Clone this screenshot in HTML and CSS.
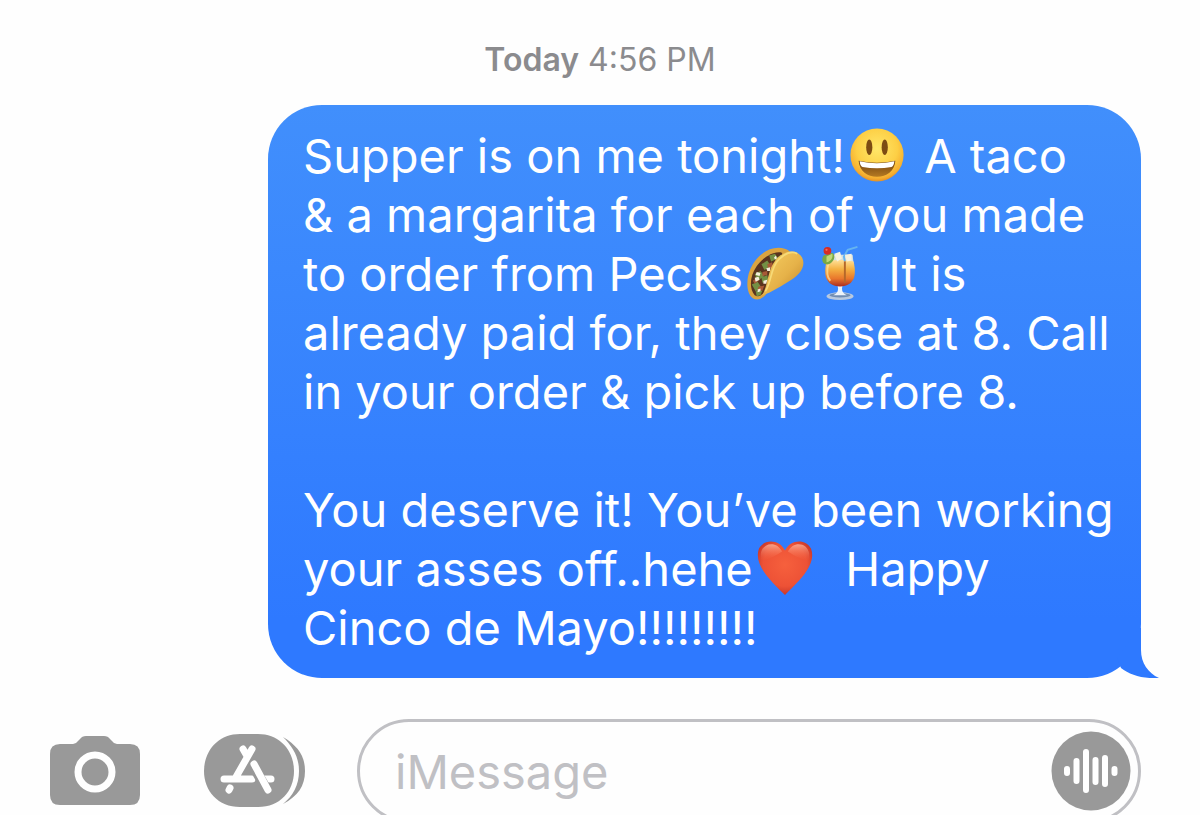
FILE: index.html
```html
<!DOCTYPE html>
<html lang="en">
<head>
  <meta charset="UTF-8" />
  <meta name="viewport" content="width=device-width, initial-scale=1.0"/>
  <title>Messages</title>
  <link rel="stylesheet" href="styles.css">
</head>
<body>

<main class="thread">
  <p class="timestamp"><strong>Today</strong> 4:56 PM</p>

  <div class="bubble">
    <p>Supper is on me tonight!<svg class="emoji" viewBox="0 0 60 60" role="img" aria-label="smiley">
        <defs>
          <radialGradient id="face" cx="50%" cy="38%" r="64%">
            <stop offset="0" stop-color="#ffe76a"/>
            <stop offset=".6" stop-color="#fdcf45"/>
            <stop offset=".87" stop-color="#f5ae30"/>
            <stop offset="1" stop-color="#dc8524"/>
          </radialGradient>
          <linearGradient id="mouth" x1="0" y1="0" x2="0" y2="1">
            <stop offset="0" stop-color="#6d3f10"/>
            <stop offset="1" stop-color="#b57a22"/>
          </linearGradient>
        </defs>
        <circle cx="30" cy="30" r="27.500" fill="url(#face)"/>
        <ellipse cx="22" cy="22" rx="3.200" ry="8" fill="#7c4b13"/>
        <ellipse cx="38" cy="22" rx="3.200" ry="8" fill="#7c4b13"/>
        <path d="M11 36Q30 40 49 36C48 47 40 52.500 30 52.500S12 47 11 36Z" fill="url(#mouth)"/>
        <path d="M12 36.500Q30 40.500 48 36.500Q47.500 41 45 42.500Q30 45 15 42.500Q12.500 41 12 36.500Z" fill="#fff"/>
      </svg> A taco &amp;&nbsp;a margarita for each of you made to order from Pecks<svg class="emoji" viewBox="0 0 60 60" role="img" aria-label="taco">
        <defs>
          <linearGradient id="shell" x1="0" y1="0" x2="1" y2="1">
            <stop offset="0" stop-color="#f6cf62"/>
            <stop offset=".55" stop-color="#e6b249"/>
            <stop offset="1" stop-color="#bd8228"/>
          </linearGradient>
        </defs>
        <path d="M7 56C-1 50 0 32 7 21C14 9 28 1 40 5C45 6 47 10 47 14L20 53Q13 60 7 56Z" fill="#dba440"/>
        <path d="M9 53C3 46 4 33 11 23C17 14 29 7 37 9L41 17L18 51Q13 56 9 53Z" fill="#5a351f"/>
        <g fill="#739044">
          <path d="M24 12l6-2 3 5-7 3zM16 21l6-4 4 6-7 4zM9 31l6-3 4 5-7 5zM6 42l6-3 4 6-6 4zM31 15l5-4 2 5-5 3zM16 35l6-3 1 6-6 2zM10 49l7-1-2 5-4 1z"/>
        </g>
        <g fill="#a85936">
          <path d="M22 21l5-2 1 5-5 2zM17 29l5-1 0 4-5 1zM7 38l4-3 2 3-4 3zM13 44l6-1-2 5-5 0z"/>
        </g>
        <g fill="#f5f0dd">
          <path d="M21 25l4-1 0 4-3 0zM11 29l4 1-1 3-4-1zM9 35l4-1 1 3-4 2zM18 38l4-1-1 4-3 0zM12 47l3-1 0 3-3 1zM29 14l2-2 1 3-2 1z"/>
        </g>
        <path d="M17 53C23 42 22 27 31 16C39 7 52 4 58 14C62 22 57 31 47 37C37 43 27 50 17 53Z" fill="url(#shell)"/>
        <path d="M20 49C27 38 25 25 34 16C40 10 47 7 53 10" fill="none" stroke="#f7da77" stroke-width="1.800"/>
      </svg><svg class="emoji" viewBox="0 0 60 60" role="img" aria-label="tropical drink">
        <defs>
          <linearGradient id="drink" x1="0" y1="0" x2="0" y2="1">
            <stop offset="0" stop-color="#ffe098"/>
            <stop offset=".35" stop-color="#f4b142"/>
            <stop offset=".7" stop-color="#e9772c"/>
            <stop offset="1" stop-color="#a92b22"/>
          </linearGradient>
        </defs>
        <ellipse cx="29" cy="54" rx="14" ry="4" fill="#b9c9df"/>
        <ellipse cx="29" cy="53" rx="11" ry="2.300" fill="#718db3"/>
        <path d="M26 41H32L31 46Q31 51 36 53H22Q27 51 27 46Z" fill="#edf3fa"/>
        <path d="M15 11H42L43 20H15Z" fill="#dfe6df" opacity=".92"/>
        <path d="M15 18C12 31 13 43 29 44C45 43 46 31 43 18Q29 15 15 18Z" fill="url(#drink)"/>
        <path d="M17 20C15 28 15 34 19 38" fill="none" stroke="#ffe29c" stroke-width="2" opacity=".7"/>
        <path d="M34 18L33 13L37 6L47 3" fill="none" stroke="#65b4f0" stroke-width="2"/>
        <path d="M34 18V40" stroke="#b5682a" stroke-width="2"/>
        <path d="M23 10L29 8L31 15L26 18ZM34 11L41 10L41 17L36 18Z" fill="#f6f2df"/>
        <path d="M12 12C9 16 11 22 17 21C23 19 25 12 21 9Z" fill="#78a844"/>
        <path d="M15 13L21 10C22 14 20 18 15 19Z" fill="#bed779"/>
        <circle cx="16" cy="7" r="4" fill="#d52d25"/>
        <circle cx="15" cy="6" r="1.200" fill="#f46b58"/>
      </svg> It is already paid for, they close at 8. Call in your order &amp; pick up before 8.</p>

    <p>You deserve it! You’ve been working your asses off..hehe<svg class="emoji" viewBox="0 0 60 60" role="img" aria-label="red heart">
        <defs>
          <radialGradient id="heart" cx="50%" cy="43%" r="62%">
            <stop offset="0" stop-color="#f6603d"/>
            <stop offset=".65" stop-color="#ed5236"/>
            <stop offset="1" stop-color="#bd3027"/>
          </radialGradient>
          <linearGradient id="shine" x1="0" y1="0" x2="0" y2="1">
            <stop offset="0" stop-color="#ffc0a8"/>
            <stop offset="1" stop-color="#f6603d" stop-opacity="0"/>
          </linearGradient>
        </defs>
        <path d="M30 12C25 1 9 -1 3 10C-3 27 16 44 30 58C44 44 63 27 57 10C51 -1 35 1 30 12Z" fill="url(#heart)"/>
        <path d="M5 15C7 3 22 2 27 13Q17 20 5 23ZM33 13C38 2 53 3 55 15V23Q43 20 33 13Z" fill="url(#shine)" opacity=".75"/>
      </svg>&nbsp; Happy Cinco de Mayo!!!!!!!!!</p>

    <svg class="tail" viewBox="0 0 48 50" aria-hidden="true">
      <path d="M28 0H30V22C30 35 37 45 48 50C32 51 19 47 10 40L6 30Z" fill="#2e79ff"/>
    </svg>
  </div>
</main>

<form class="composer">
  <button class="icon-button" type="button" aria-label="Camera">
    <svg width="90" height="70" viewBox="0 0 90 70">
      <path d="M10 8H23Q26 8 28 5L30 3Q32 0 36 0H54Q58 0 60 3L62 5Q64 8 67 8H80Q90 8 90 18V59Q90 69 80 69H10Q0 69 0 59V18Q0 8 10 8Z" fill="#999"/>
      <circle cx="45" cy="36" r="17" fill="none" stroke="#fff" stroke-width="7"/>
    </svg>
  </button>

  <button class="icon-button" type="button" aria-label="Apps">
    <svg width="102" height="74" viewBox="0 0 102 74">
      <path d="M79 3C94 12 101 22 101 37S94 62 79 70C89 62 95 51 95 37S89 13 79 3Z" fill="#999"/>
      <path d="M36 0H54C76 0 90 17 90 37S76 73 54 73H36C14 73 0 57 0 37S14 0 36 0Z" fill="#999"/>
      <g fill="none" stroke="#fff" stroke-width="7" stroke-linecap="round">
        <path d="M39 15L43 22M48 15L32 43M20 45H48M58 45H67M26 54L25 56"/>
        <path d="M48 30L63 56" stroke="#999" stroke-width="10" stroke-linecap="butt"/>
        <path d="M50 30L64 56"/>
      </g>
    </svg>
  </button>

  <div class="field">
    <input class="message-input" type="text" placeholder="iMessage" aria-label="iMessage">
    <button class="audio-button" type="button" aria-label="Record audio">
      <svg width="80" height="80" viewBox="0 0 80 80">
        <circle cx="40" cy="40" r="39.500" fill="#999"/>
        <path d="M16 38V42M25.500 30V50M35 21V59M44.500 29V51M54 27V53M63.500 38V42" fill="none" stroke="#fff" stroke-width="6" stroke-linecap="round"/>
      </svg>
    </button>
  </div>
</form>

</body>
</html>
```

FILE: styles.css
```css
:root {
  --bubble-top: #418ffc;
  --bubble-bottom: #2e79ff;
  --gray: #8b8b8e;
  --border: #c0c0c4;
}

* {
  box-sizing: border-box;
}

body {
  margin: 0;
  height: 100vh;
  overflow: hidden;
  background: #fefefe;
  font-family: Inter, "Liberation Sans", sans-serif;
}

.thread {
  display: flex;
  flex-direction: column;
  padding: 40px 59px 0 268px;
}

.timestamp {
  margin: 0 -59px 25px -268px;
  color: var(--gray);
  font-size: 32px;
  line-height: 40px;
  text-align: center;
}

.timestamp strong {
  font-weight: 600;
}

.bubble {
  position: relative;
  padding: 21px 24px 21px 35px;
  border-radius: 54px;
  background: linear-gradient(var(--bubble-top), var(--bubble-bottom) 90%);
  color: #fff;
  font-size: 47px;
  line-height: 59px;
}

.bubble p {
  margin: 0;
}

.bubble p + p {
  margin-top: 59px;
}

.emoji {
  width: 60px;
  height: 58px;
  margin: -12px 4px 0 2px;
  vertical-align: -11px;
}

.tail {
  position: absolute;
  right: -18px;
  bottom: 0;
  width: 48px;
  height: 50px;
}

.composer {
  display: flex;
  align-items: center;
  padding: 41px 59px 0 50px;
}

button {
  padding: 0;
  border: 0;
  background: none;
  cursor: pointer;
}

button svg {
  display: block;
}

.icon-button {
  flex: none;
}

.icon-button + .icon-button {
  margin-left: 64px;
}

.field {
  display: flex;
  flex: 1;
  align-items: center;
  min-width: 0;
  height: 104px;
  margin-left: 51px;
  padding: 0 7px 0 35px;
  border: 3px solid var(--border);
  border-radius: 52px;
}

.message-input {
  flex: 1;
  min-width: 0;
  padding: 0;
  border: 0;
  outline: 0;
  background: none;
  font: 47px/59px Inter, "Liberation Sans", sans-serif;
}

.message-input::placeholder {
  color: var(--border);
}
```
